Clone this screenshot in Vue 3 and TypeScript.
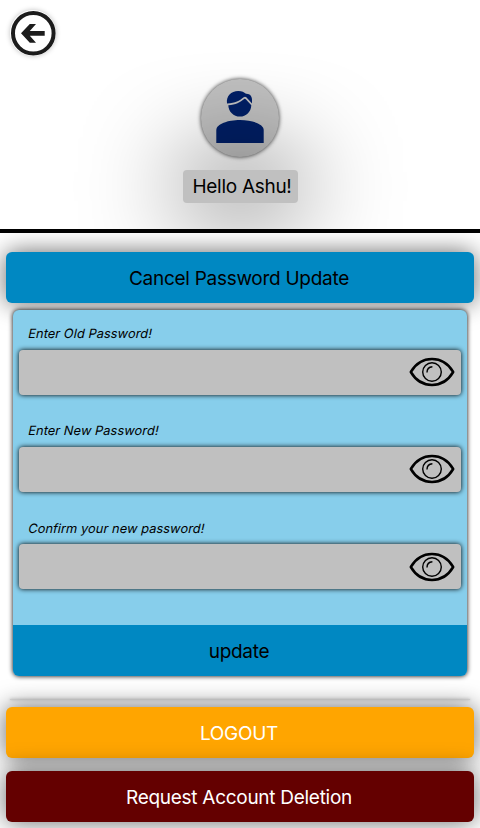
<script setup lang="ts">
import { ref } from 'vue'

interface Field {
  id: string
  label: string
  value: string
  visible: boolean
}

const userName = ref('Ashu')
const fields = ref<Field[]>([
  { id: 'old', label: 'Enter Old Password!', value: '', visible: false },
  { id: 'new', label: 'Enter New Password!', value: '', visible: false },
  { id: 'confirm', label: 'Confirm your new password!', value: '', visible: false },
])
</script>

<template>
  <main class="page">
    <header class="header">
      <button class="back" aria-label="Back">
        <svg viewBox="0 0 46 46" width="46" height="46">
          <circle cx="23.3" cy="23.3" r="20.3" fill="none" stroke="#1c1c1c" stroke-width="4" />
          <path d="M11 23.3 19.8 14H26L19.8 21H34.7V25.7H19.8L26 32.8H19.8Z" fill="#1c1c1c" />
        </svg>
      </button>
      <div class="avatar">
        <svg viewBox="1 1 78 78" width="78" height="78" fill="#001f66">
          <path d="M27 25.4C26 18 31 12.9 38.3 12.9C42 12.9 44 14 46 15.8C50 15.5 52 18.5 52 21.7V25.5L46.3 19.2Q45 18.4 43.7 19.2C39 23 36 24.8 27 25.4Z" />
          <path d="M28.3 27.2C36 27 39.8 24.5 44.5 20.8Q45.2 20.5 45.8 21.2L51.3 27.2C51 34 46 38.6 40 38.6C33.5 38.6 28.5 33.5 28.3 27.2Z" />
          <path d="M16.3 65V52C16.3 46 28 42 40 42S63.7 46 63.7 52V65Z" />
        </svg>
      </div>
      <div class="greeting">Hello {{ userName }}!</div>
    </header>

    <section class="actions">
      <button class="bar bar-blue">Cancel Password Update</button>
      <form class="panel" @submit.prevent>
        <div v-for="field in fields" :key="field.id" class="field">
          <label class="label" :for="field.id">{{ field.label }}</label>
          <div class="control">
            <input :id="field.id" v-model="field.value" :type="field.visible ? 'text' : 'password'" />
            <button type="button" class="eye" aria-label="Show password" @click="field.visible = !field.visible">
              <svg viewBox="0 0 46 30" width="46" height="30" fill="none" stroke="#000">
                <path d="M1.8 15C12-2.2 34-2.2 44.2 15C34 32.2 12 32.2 1.8 15Z" stroke-width="2.5" stroke-linejoin="round" />
                <circle cx="23" cy="15" r="9.3" stroke-width="1.4" />
                <path d="M18 15.5C18 12 20.2 9.9 23.4 9.7" stroke-width="1.4" />
              </svg>
            </button>
          </div>
        </div>
        <button class="submit">update</button>
      </form>
      <div class="divider"></div>
      <button class="bar bar-orange">LOGOUT</button>
      <button class="bar bar-red">Request Account Deletion</button>
    </section>
  </main>
</template>

<style>
body {
  background: #fff;
  overflow: hidden;
}
</style>

<style scoped>
.page {
  height: 828px;
  overflow: hidden;
  font-family: Inter, 'Liberation Sans', sans-serif;
  font-size: 19px;
  letter-spacing: -0.28px;
  color: #000;
}
button {
  font: inherit;
  letter-spacing: inherit;
  color: inherit;
  border: 0;
  padding: 0;
  background: none;
  display: block;
}
.header {
  box-sizing: border-box;
  height: 233px;
  border-bottom: 4px solid #000;
  overflow: hidden;
  display: flex;
  flex-direction: column;
  align-items: center;
}
.back {
  align-self: flex-start;
  width: 46px;
  height: 46px;
  margin: 10px 0 0 10px;
  border-radius: 50%;
  box-shadow: 0 0 5px rgba(0, 0, 0, 0.25);
}
.back svg,
.avatar svg,
.eye svg {
  display: block;
}
.avatar {
  width: 78px;
  height: 78px;
  margin-top: 23px;
  border-radius: 50%;
  background: silver;
  box-shadow: 0 0 4px rgba(0, 0, 0, 0.8);
}
.greeting {
  box-sizing: border-box;
  width: 115px;
  height: 33px;
  margin-top: 13px;
  padding-left: 4px;
  line-height: 34px;
  text-align: center;
  white-space: nowrap;
  border-radius: 4px;
  background: silver;
  box-shadow: 0 0 100px #000;
}
.actions {
  height: 595px;
  box-sizing: border-box;
  padding: 19px 6px 0;
  overflow: hidden;
  display: flex;
  flex-direction: column;
}
.bar {
  flex: none;
  height: 51px;
  padding: 2px 2px 0 0;
  border-radius: 6px;
  box-shadow: 0 0 25px rgba(0, 0, 0, 0.6);
}
.bar-blue {
  background: #0088c2;
}
.bar-orange {
  background: orange;
  color: #fff;
}
.bar-red {
  margin-top: 13px;
  background: #640000;
  color: #fff;
}
.panel {
  position: relative;
  flex: none;
  margin: 7px 7px 0;
  height: 366px;
  display: flex;
  flex-direction: column;
  border-radius: 6px;
  background: skyblue;
  box-shadow: 0 0 5px #000;
}
.field {
  padding: 0 6px;
  height: 97.4px;
}
.label {
  display: block;
  height: 39.5px;
  padding-left: 8.3px;
  line-height: 48px;
  font-size: 12.8px;
  letter-spacing: 0.07px;
  transform: skewX(-12deg);
  transform-origin: 0 29px;
}
.control {
  height: 45px;
  display: flex;
  align-items: center;
  padding-right: 6px;
  border-radius: 4px;
  background: silver;
  box-shadow: 0 0 5px #000;
}
.control input {
  flex: 1;
  min-width: 0;
  height: 100%;
  border: 0;
  outline: 0;
  padding: 0 9px;
  background: none;
  font: inherit;
}
.submit {
  height: 51px;
  margin-top: auto;
  padding: 2px 2px 0 0;
  border-radius: 0 0 6px 6px;
  background: #0088c2;
}
.divider {
  flex: none;
  height: 1px;
  margin: 23px 4px 7px;
  background: rgba(0, 0, 0, 0.12);
  box-shadow: 0 0 3px rgba(0, 0, 0, 0.35);
}
</style>
